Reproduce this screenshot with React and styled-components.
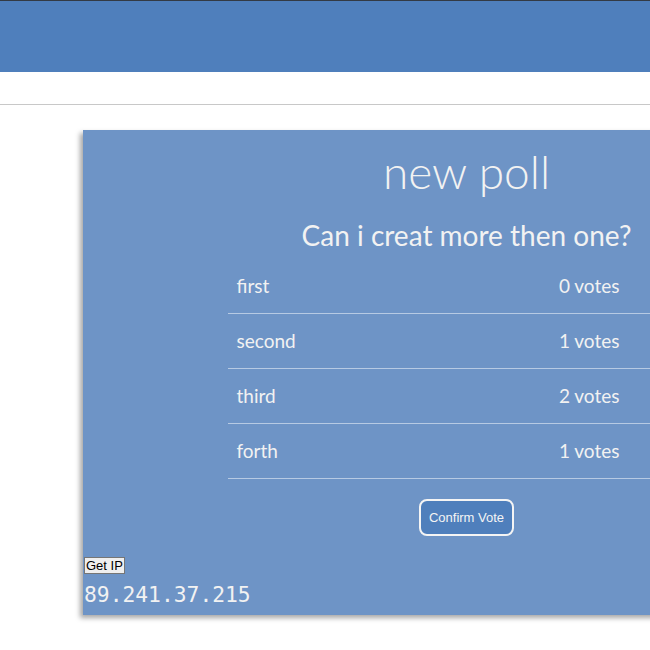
import React from 'react';
import styled, { createGlobalStyle } from "styled-components"

const GlobalStyle = createGlobalStyle`
	html, body {
		margin: 0;
		padding: 0;
		overflow-x: hidden;
		background: #fff;
		font-family: Lato, "Open Sans", sans-serif;
	}
`;

const Header = styled.header`
	height: 71px;
	background: #4f7fbc;
	border-top: 1px solid #333a44;
`;

const Nav = styled.nav`
	height: 32px;
	border-bottom: 1px solid #c8c8c8;
`;

const Main = styled.main`
	padding: 25px 0 40px 83px;
`;

const Card = styled.section`
	width: 766px;
	background: #6e94c6;
	box-shadow: -3px 3px 5px rgba(0, 0, 0, 0.35);
	padding: 0 0 6px 1px;
	box-sizing: border-box;
	color: #f2f2f2;
`;

const Title = styled.h1`
	margin: 0;
	padding-top: 14px;
	font-weight: 300;
	font-size: 46px;
	line-height: 56px;
	text-align: center;
`;

const Question = styled.h2`
	margin: 17px 0 0;
	font-weight: 400;
	font-size: 28px;
	line-height: 36px;
	text-align: center;
`;

const List = styled.ul`
	list-style: none;
	width: 476px;
	margin: 6px auto 0;
	padding: 0 2px 0 0;
`;

const Row = styled.li`
	display: flex;
	justify-content: space-between;
	align-items: center;
	height: 55px;
	box-sizing: border-box;
	padding: 0 84px 2px 9px;
	border-bottom: 1px solid rgba(255, 255, 255, 0.5);
	font-size: 19px;
`;

const Actions = styled.div`
	display: flex;
	justify-content: center;
	margin-top: 20px;
`;

const ConfirmButton = styled.button`
	background: #4f7fbc;
	color: #f4f4f4;
	border: 2px solid #f4f4f4;
	border-radius: 8px;
	padding: 9px 8px;
	font-family: "Liberation Sans", Arial, sans-serif;
	font-size: 13px;
	line-height: 15px;
	cursor: pointer;
`;

const IpButton = styled.button`
	display: block;
	margin-top: 21px;
	font-family: "Liberation Sans", Arial, sans-serif;
	font-size: 13px;
	line-height: 15px;
	padding: 0 1px;
	background: #efefef;
	border: 1px solid #767676;
	border-radius: 0;
	color: #000;
`;

const Ip = styled.div`
	font-family: "DejaVu Sans Mono", monospace;
	font-size: 21.3px;
	line-height: 28px;
	margin-top: 7px;
	color: #f2f2f2;
`;

const options = [
	{ name: "first", votes: 0 },
	{ name: "second", votes: 1 },
	{ name: "third", votes: 2 },
	{ name: "forth", votes: 1 },
]

export default function App() {
	return (
		<>
			<GlobalStyle />
			<Header />
			<Nav />
			<Main>
				<Card>
					<Title>new poll</Title>
					<Question>Can i creat more then one?</Question>
					<List>
						{options.map((o) => (
							<Row key={o.name}>
								<span>{o.name}</span>
								<span>{o.votes} votes</span>
							</Row>
						))}
					</List>
					<Actions>
						<ConfirmButton>Confirm Vote</ConfirmButton>
					</Actions>
					<IpButton>Get IP</IpButton>
					<Ip>89.241.37.215</Ip>
				</Card>
			</Main>
		</>
	)
}
